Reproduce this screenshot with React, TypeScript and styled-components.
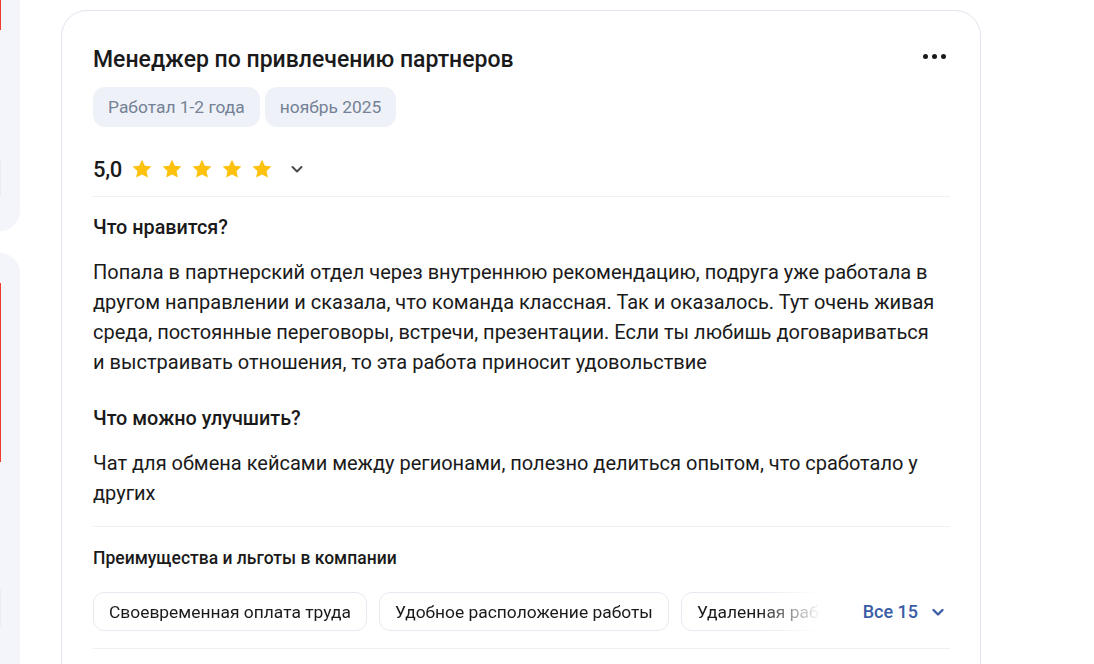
import React from "react";
import styled, { createGlobalStyle } from "styled-components";

const Global = createGlobalStyle`
  html, body { margin: 0; padding: 0; background: #ffffff; }
  body { font-family: Roboto, "Noto Sans", Arial, sans-serif; color: #1a1a1a; overflow: hidden; }
  * { box-sizing: border-box; }
`;

const Page = styled.div`
  display: flex;
  align-items: flex-start;
  width: 1094px;
  height: 664px;
  overflow: hidden;
`;

const Sidebar = styled.div`
  display: flex;
  flex-direction: column;
  gap: 22px;
  width: 220px;
  margin-left: -200px;
  margin-top: -40px;
  flex-shrink: 0;
`;

const SideCard = styled.div<{ $h: number; $pt: number }>`
  height: ${(p) => p.$h}px;
  padding-top: ${(p) => p.$pt}px;
  background: #f4f5fa;
  border-radius: 0 20px 20px 0;
  display: flex;
  flex-direction: column;
  align-items: flex-end;
  padding-right: 19px;
`;

const Stripe = styled.div<{ $h: number; $c: string; $mt?: number }>`
  width: 2px;
  height: ${(p) => p.$h}px;
  margin-top: ${(p) => p.$mt ?? 0}px;
  background: ${(p) => p.$c};
`;

const Card = styled.div`
  margin-left: 41px;
  margin-top: 10px;
  width: 920px;
  flex-shrink: 0;
  border: 1px solid #dfe4ee;
  border-radius: 26px;
  padding: 31px 30px 0 31px;
  height: 700px;
`;

const Header = styled.div`
  display: flex;
  align-items: flex-start;
  justify-content: space-between;
`;

const Title = styled.h2`
  margin: 3px 0 0;
  font-size: 23px;
  font-weight: 500;
  line-height: 30px;
  color: #1a1a1a;
`;

const Dots = styled.div`
  display: flex;
  gap: 4px;
  padding-top: 12px;
  padding-right: 4px;
`;

const Dot = styled.span`
  width: 5px;
  height: 5px;
  border-radius: 50%;
  background: #1a1a1a;
`;

const Tags = styled.div`
  display: flex;
  gap: 5px;
  margin-top: 12px;
`;

const Tag = styled.span`
  height: 40px;
  display: inline-flex;
  align-items: center;
  padding: 0 15px;
  background: #eef1f7;
  border-radius: 12px;
  font-size: 17.4px;
  color: #748196;
`;

const RatingRow = styled.div`
  display: flex;
  align-items: center;
  height: 32px;
  margin-top: 26px;
`;

const Score = styled.span`
  font-size: 22px;
  font-weight: 500;
  margin-right: 9px;
  letter-spacing: -0.3px;
`;

const Stars = styled.div`
  display: flex;
  gap: 8px;
`;

const Chevron = styled.span<{ $ml: number; $c: string }>`
  display: inline-flex;
  margin-left: ${(p) => p.$ml}px;
  color: ${(p) => p.$c};
`;

const Divider = styled.div<{ $mt: number }>`
  height: 1px;
  background: #eef0f4;
  margin-top: ${(p) => p.$mt}px;
`;

const SectionTitle = styled.h3<{ $mt: number; $size?: number }>`
  margin: ${(p) => p.$mt}px 0 0;
  font-size: ${(p) => p.$size ?? 19.8}px;
  font-weight: 500;
  line-height: 24px;
`;

const Body = styled.p`
  margin: 17px 0 0;
  font-size: 20px;
  line-height: 30px;
  color: #1a1a1a;
  padding-right: 10px;
`;

const BenefitsRow = styled.div`
  display: flex;
  align-items: center;
  margin-top: 22px;
`;

const ChipScroller = styled.div`
  flex: 1;
  min-width: 0;
  display: flex;
  gap: 12px;
  overflow: hidden;
  -webkit-mask-image: linear-gradient(to right, #000 0, #000 665px, transparent 728px);
  mask-image: linear-gradient(to right, #000 0, #000 665px, transparent 728px);
  margin-right: 42px;
`;

const Chip = styled.span`
  flex-shrink: 0;
  height: 39px;
  display: inline-flex;
  align-items: center;
  padding: 0 15px;
  border: 1px solid #e6eaf1;
  border-radius: 11px;
  font-size: 17.4px;
  color: #1a1a1a;
  white-space: nowrap;
`;

const AllButton = styled.button`
  display: inline-flex;
  align-items: center;
  flex-shrink: 0;
  background: none;
  border: 0;
  padding: 0 5px 0 0;
  font-family: inherit;
  font-size: 18px;
  font-weight: 500;
  color: #3a5da5;
  cursor: pointer;
`;

const StarIcon = () => (
  <svg width="22" height="22" viewBox="0 0 24 24">
    <path
      d="M12 1.8l3.1 6.6 7.2.9-5.3 5 1.4 7.1L12 17.9l-6.4 3.5 1.4-7.1-5.3-5 7.2-.9z"
      fill="#fdc10e"
    />
  </svg>
);

const ChevronIcon = ({ w = 14, sw = 2 }: { w?: number; sw?: number }) => (
  <svg width={w} height={w} viewBox="0 0 14 14" fill="none">
    <path d="M2.5 5l4.5 4.5L11.5 5" stroke="currentColor" strokeWidth={sw} strokeLinecap="round" strokeLinejoin="round" />
  </svg>
);

export default function App() {
  return (
    <>
      <Global />
      <Page>
        <Sidebar>
          <SideCard $h={271} $pt={40}>
            <Stripe $h={30} $c="#f03a2e" />
            <Stripe $h={36} $c="#e9ebf1" $mt={130} />
          </SideCard>
          <SideCard $h={460} $pt={30}>
            <Stripe $h={179} $c="#f03a2e" />
            <Stripe $h={36} $c="#e9ebf1" $mt={128} />
          </SideCard>
        </Sidebar>
        <Card>
          <Header>
            <Title>Менеджер по привлечению партнеров</Title>
            <Dots>
              <Dot />
              <Dot />
              <Dot />
            </Dots>
          </Header>
          <Tags>
            <Tag>Работал 1-2 года</Tag>
            <Tag>ноябрь 2025</Tag>
          </Tags>
          <RatingRow>
            <Score>5,0</Score>
            <Stars>
              <StarIcon />
              <StarIcon />
              <StarIcon />
              <StarIcon />
              <StarIcon />
            </Stars>
            <Chevron $ml={17} $c="#4a4a4a">
              <ChevronIcon />
            </Chevron>
          </RatingRow>
          <Divider $mt={11} />
          <SectionTitle $mt={19}>Что нравится?</SectionTitle>
          <Body>
            Попала в партнерский отдел через внутреннюю рекомендацию, подруга уже работала в другом направлении и
            сказала, что команда классная. Так и оказалось. Тут очень живая среда, постоянные переговоры, встречи,
            презентации. Если ты любишь договариваться и выстраивать отношения, то эта работа приносит удовольствие
          </Body>
          <SectionTitle $mt={30}>Что можно улучшить?</SectionTitle>
          <Body>Чат для обмена кейсами между регионами, полезно делиться опытом, что сработало у других</Body>
          <Divider $mt={18} />
          <SectionTitle $mt={19} $size={17.5}>Преимущества и льготы в компании</SectionTitle>
          <BenefitsRow>
            <ChipScroller>
              <Chip>Своевременная оплата труда</Chip>
              <Chip>Удобное расположение работы</Chip>
              <Chip>Удаленная работа</Chip>
            </ChipScroller>
            <AllButton>
              Все 15
              <Chevron $ml={13} $c="#3a5da5">
                <ChevronIcon sw={2.4} />
              </Chevron>
            </AllButton>
          </BenefitsRow>
          <Divider $mt={17} />
        </Card>
      </Page>
    </>
  );
}
